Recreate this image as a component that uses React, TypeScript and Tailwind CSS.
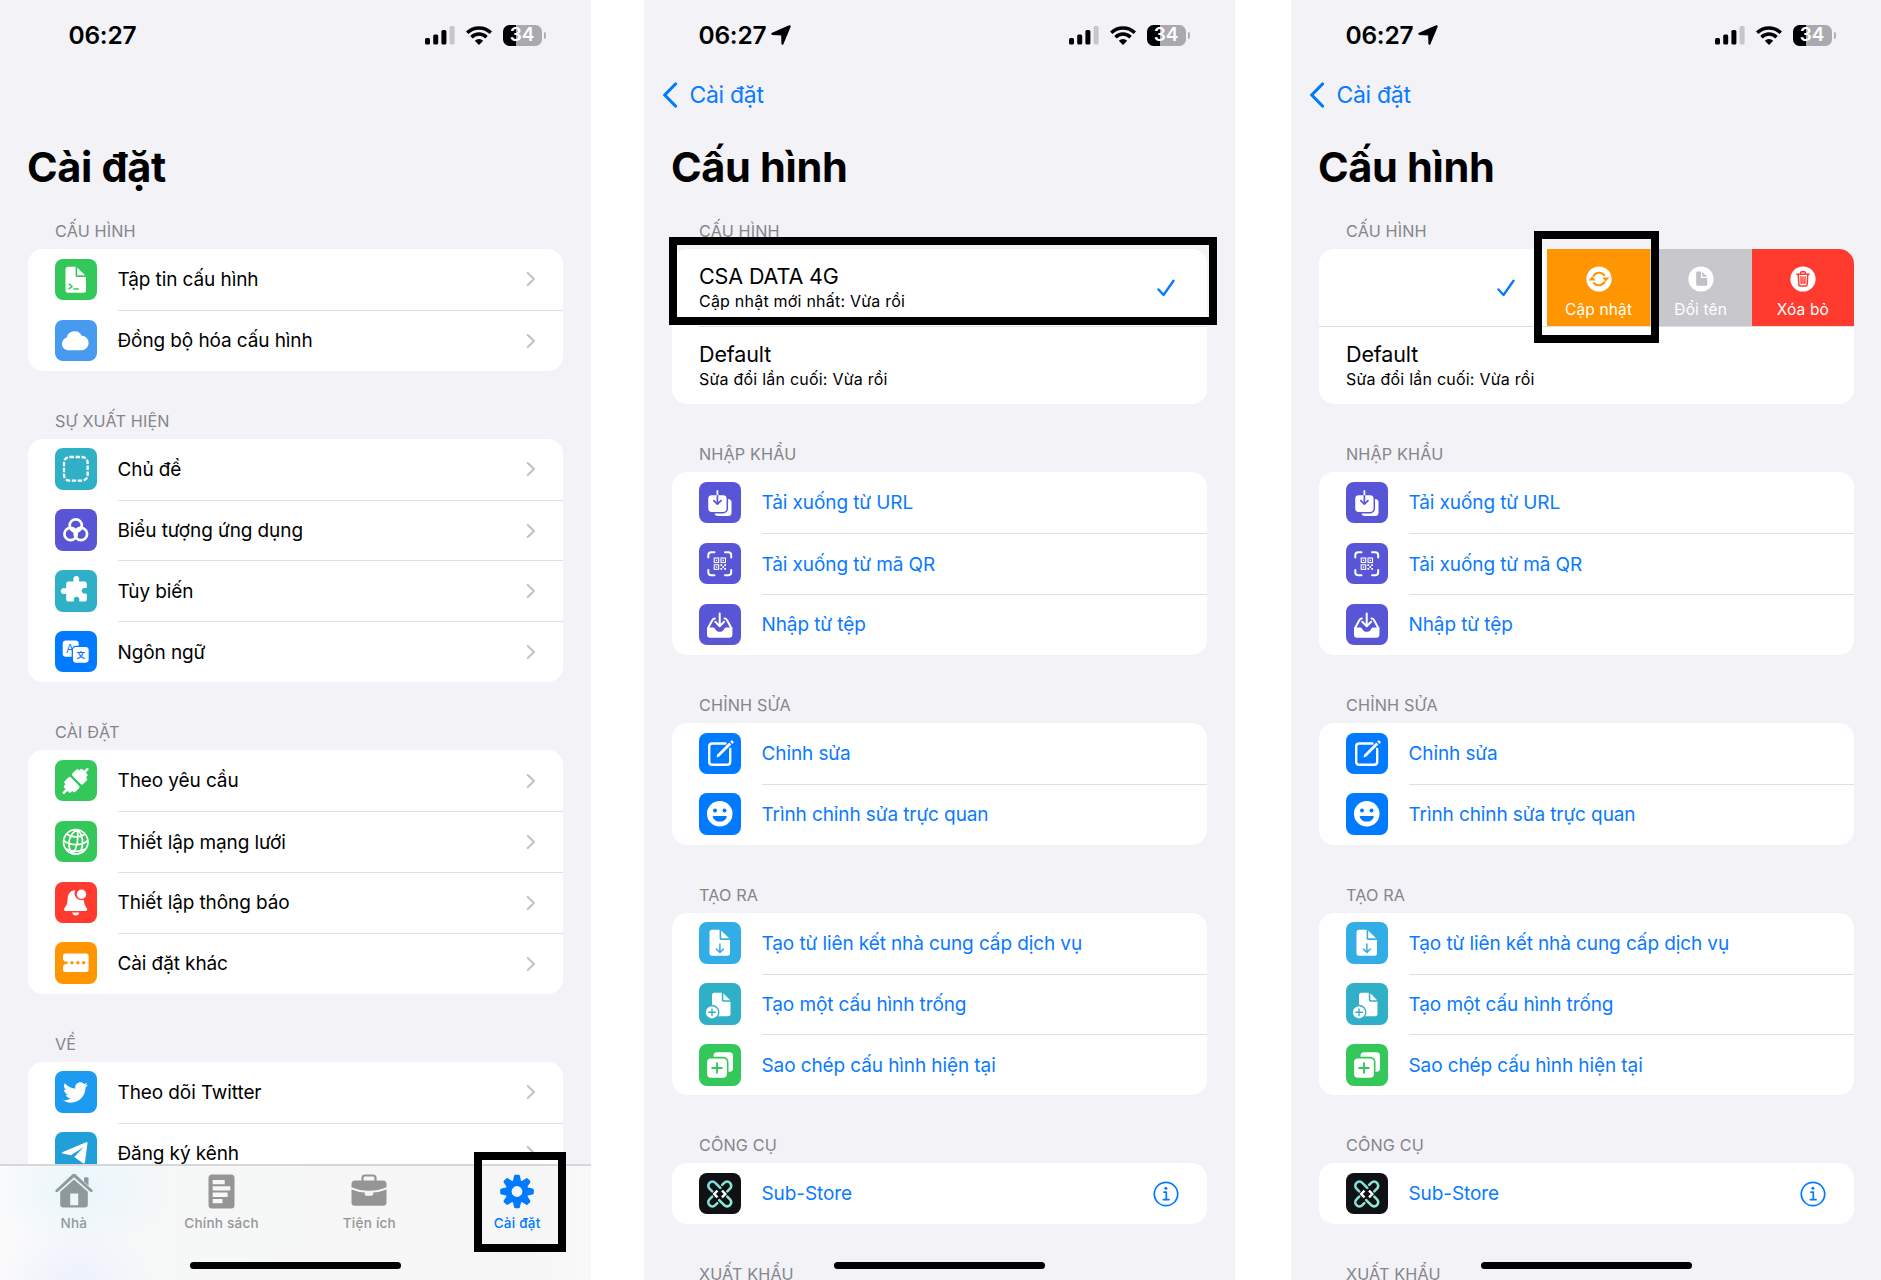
import type { ReactNode } from "react";
import { FaTwitter } from "react-icons/fa";

const Tile = ({ bg, children }: { bg: string; children: ReactNode }) => (
  <div className={`size-[41.5px] shrink-0 overflow-hidden rounded-[8px] ${bg}`}>
    <svg viewBox="0 0 41.5 41.5" className="block size-full" fill="none">
      {children}
    </svg>
  </div>
);

const GREEN = "bg-[#34c759]";
const TEAL = "bg-[#30b0c7]";
const INDIGO = "bg-[#5856d6]";
const BLUE = "bg-[#007aff]";

const Doc = ({ fold }: { fold: string }) => (
  <>
    <path fill="#fff" d="M13 7.8h7.6v8.6q0 1.6 1.6 1.6h8.8v13.2q0 2.5-2.5 2.5H13q-2.5 0-2.5-2.5V10.3q0-2.5 2.5-2.5z" />
    <path fill="#fff" stroke={fold} strokeWidth="0.4" d="M22 8.2v7.7q0 .7.7.7h7.9z" />
  </>
);

const icons: Record<string, ReactNode> = {
  file: (
    <Tile bg={GREEN}>
      <Doc fold="#34c759" />
      <path stroke="#34c759" strokeWidth="1.5" strokeLinecap="round" strokeLinejoin="round" d="M14.2 25.2l3 2.3-3 2.2M19 30h4.2" />
    </Tile>
  ),
  cloud: (
    <Tile bg="bg-[#469bf0]">
      <path fill="#fff" d="M13 30.2a6.4 6.4 0 0 1-1.3-12.6 8 8 0 0 1 15-1.9 7.3 7.3 0 0 1 .8 14.5z" />
    </Tile>
  ),
  theme: (
    <Tile bg={TEAL}>
      <rect x="9" y="9" width="23.6" height="23.6" rx="5.5" stroke="#fff" strokeWidth="2.3" strokeDasharray="4.4 1.6" />
    </Tile>
  ),
  rings: (
    <Tile bg={INDIGO}>
      <g stroke="#fff" strokeWidth="2.7">
        <circle cx="20.75" cy="16.4" r="6.1" />
        <circle cx="15.6" cy="25" r="6.2" />
        <circle cx="25.9" cy="25" r="6.2" />
      </g>
    </Tile>
  ),
  puzzle: (
    <Tile bg={TEAL}>
      <path
        fill="#fff"
        d="M13.4 11.5h4.4c.9 0 1-.7.7-1.400a3 3 0 1 1 5.6 0c-.3.7-.2 1.400.7 1.400h4.800q2.200 0 2.200 2.200v3.600c0 .8-.7.9-1.300.7a2.900 2.900 0 1 0 0 5.500c.6-.2 1.300-.1 1.300.7v5.200q0 2.200-2.200 2.200h-4.600c-.8 0-.9-.7-.7-1.300a2.800 2.800 0 1 0-5.400 0c.2.6.1 1.300-.7 1.300h-4.800q-2.200 0-2.200-2.200v-4.800c0-.9-.7-1-1.400-.7a3 3 0 1 1 0-5.600c.7.3 1.400.2 1.400-.7v-3.900q0-2.200 2.200-2.200z"
      />
    </Tile>
  ),
  language: (
    <Tile bg={BLUE}>
      <rect x="7.7" y="9.5" width="16" height="16.3" rx="3.2" fill="#fff" />
      <text x="15" y="22" fontSize="11.5" textAnchor="middle" fill="#007aff" fontFamily="Inter, sans-serif">A</text>
      <rect x="17.3" y="15.3" width="17" height="17" rx="3.8" fill="#fff" stroke="#007aff" strokeWidth="1.3" />
      <text x="25.8" y="27.3" fontSize="8.5" fontWeight="700" textAnchor="middle" fill="#007aff" fontFamily="'Noto Sans CJK SC', sans-serif">文</text>
    </Tile>
  ),
  plug: (
    <Tile bg={GREEN}>
      <g transform="rotate(45 20.75 20.75)" fill="#fff">
        <rect x="19.5" y="3" width="2.5" height="8" rx="1.2" />
        <rect x="16" y="7.8" width="9.5" height="6" rx="1.5" />
        <rect x="13.2" y="11" width="15.1" height="8.6" rx="1.8" />
        <rect x="13.2" y="21.9" width="15.1" height="8.6" rx="1.8" />
        <rect x="16" y="28.2" width="9.5" height="5.6" rx="1.5" />
        <rect x="19.5" y="31" width="2.5" height="8" rx="1.2" />
      </g>
    </Tile>
  ),
  globe: (
    <Tile bg={GREEN}>
      <g stroke="#fff" strokeWidth="1.7">
        <circle cx="20.75" cy="20.9" r="12.2" />
        <path d="M22.5 8.7c-9 4-11 16-5.5 23.7M22.5 8.7c1 8 0 17-4.5 24.2M22.5 8.7c5.5 5 7 15 2 23.7M11.7 12.8c5 4 13 4 18.5.5M8.6 19.5c7 5.5 18 5.5 24.3 0M10.8 27.800c6 3.300 14.500 3.300 20 0" />
      </g>
    </Tile>
  ),
  bell: (
    <Tile bg="bg-[#ff3b30]">
      <path fill="#fff" d="M19.2 8.2c-4.4.9-6.3 4-6.5 8.3-.2 5.300-1.500 7.300-3.200 9.500-1.100 1.500-.4 3 1.200 3h19.800c1.600 0 2.300-1.500 1.200-3-1.500-2-2.600-4-3-8.200a6.800 6.800 0 0 1-8.300-9.600zM17.300 30.500h6.900a3.500 3.500 0 0 1-6.900 0z" />
      <circle cx="26.5" cy="12.3" r="4.7" fill="#fff" />
    </Tile>
  ),
  more: (
    <Tile bg="bg-[#ff9500]">
      <path fill="#fff" d="M10.5 11.5h20.6q2.500 0 2.500 2.500v13.500q0 2.500-2.500 2.500H10.500q-2.500 0-2.500-2.500V24a3.400 3.400 0 0 0 0-6.300V14q0-2.500 2.500-2.500z" />
      <g fill="#ff9500">
        <circle cx="11.2" cy="20.8" r="1.5" />
        <circle cx="17" cy="20.8" r="1.7" />
        <circle cx="22.9" cy="20.8" r="1.7" />
        <circle cx="28.7" cy="20.8" r="1.7" />
      </g>
    </Tile>
  ),
  twitter: (
    <div className="flex size-[41.5px] shrink-0 items-center justify-center rounded-[8px] bg-[#1d9bf0]">
      <FaTwitter size={25} color="#fff" />
    </div>
  ),
  telegram: (
    <Tile bg="bg-[#229ed9]">
      <path fill="#fff" d="M7.3 20.3L31 10.2q1.700-.500 1.500 1.200l-2.600 19q-.400 1.800-2 .800l-8.600-6.300L28.600 15 16 23.300l-8.500-1.700q-1.300-.500-.2-1.300z" />
    </Tile>
  ),
  url: (
    <Tile bg={INDIGO}>
      <rect x="15.5" y="17" width="17" height="17" rx="3.5" fill="#fff" />
      <rect x="8.5" y="12.6" width="19.8" height="18.2" rx="4.2" fill="#fff" stroke="#5856d6" strokeWidth="1.5" />
      <path stroke="#fff" strokeWidth="1.8" strokeLinecap="round" d="M18.4 8.8v5" />
      <path stroke="#5856d6" strokeWidth="1.7" strokeLinecap="round" strokeLinejoin="round" d="M18.4 13.8v8.2M14.8 18.6l3.6 3.6 3.6-3.6" />
    </Tile>
  ),
  qr: (
    <Tile bg={INDIGO}>
      <path stroke="#fff" strokeWidth="2" strokeLinecap="round" d="M9.3 14.5v-2.2q0-3 3-3h3.200M26 9.300h3.200q3 0 3 3v2.200M32.200 27v2.200q0 3-3 3H26M15.500 32.200h-3.200q-3 0-3-3V27" />
      <g stroke="#fff" strokeWidth="1.1">
        <rect x="15.2" y="15" width="4.5" height="4.5" />
        <rect x="22" y="15" width="4.5" height="4.5" />
        <rect x="15.2" y="21.8" width="4.5" height="4.5" />
      </g>
      <g fill="#fff">
        <rect x="16.8" y="16.6" width="1.4" height="1.4" />
        <rect x="23.6" y="16.6" width="1.4" height="1.4" />
        <rect x="16.8" y="23.4" width="1.4" height="1.4" />
        <rect x="21.4" y="21.2" width="1.8" height="1.8" />
        <rect x="25.2" y="21.2" width="1.8" height="1.8" />
        <rect x="23.3" y="23.1" width="1.8" height="1.8" />
        <rect x="21.4" y="25" width="1.8" height="1.8" />
        <rect x="25.2" y="25" width="1.8" height="1.8" />
      </g>
    </Tile>
  ),
  tray: (
    <Tile bg={INDIGO}>
      <path fill="#fff" d="M8 23.4h6.300q1.400 0 1.800 1.300 1.200 3.100 4.600 3.100t4.600-3.100q.4-1.300 1.800-1.300h6.300v7.300q0 3-3 3H11q-3 0-3-3z" />
      <path stroke="#fff" strokeWidth="2" strokeLinecap="round" strokeLinejoin="round" d="M9 24.200l4.300-8q.9-1.600 2.600-1.600M32.400 24.200l-4.300-8q-.9-1.600-2.600-1.600M20.700 9.500v11.800M16.300 17.800l4.400 4.400 4.400-4.400" />
    </Tile>
  ),
  edit: (
    <Tile bg={BLUE}>
      <path stroke="#fff" strokeWidth="2.4" strokeLinecap="round" d="M26.500 10.500H13.200q-3 0-3 3v15.200q0 3 3 3h15q3 0 3-3V16" />
      <path stroke="#fff" strokeWidth="2.8" d="M19.600 22.200L31.300 10.500" />
      <path fill="#fff" d="M18.500 20.800l2.400 2.400-3.500 1.300zM31.200 8.600l1.300-1.100q.6-.4 1.200.2l.7.7q.6.6.1 1.300l-1 1.200z" />
    </Tile>
  ),
  smile: (
    <Tile bg={BLUE}>
      <circle cx="20.75" cy="20.75" r="12.8" fill="#fff" />
      <g fill="#007aff">
        <circle cx="16" cy="17.5" r="2" />
        <circle cx="25.5" cy="17.5" r="2" />
        <path d="M14.500 23h12.500q1 0 .8.900c-1 3-3.700 4.700-7 4.700s-6-1.700-7.100-4.700q-.2-.9.800-.9z" />
      </g>
    </Tile>
  ),
  docDown: (
    <Tile bg="bg-[#32ade6]">
      <Doc fold="#32ade6" />
      <path stroke="#32ade6" strokeWidth="1.5" strokeLinecap="round" strokeLinejoin="round" d="M20.900 22v8.200M17.400 27l3.500 3.500 3.500-3.500" />
    </Tile>
  ),
  docPlus: (
    <Tile bg={TEAL}>
      <path fill="#fff" d="M15.500 9.800h7.300v7.300q0 1.700 1.700 1.700h7v12q0 2.500-2.500 2.500H13V12.300q0-2.500 2.500-2.500z" />
      <path fill="#fff" d="M24.300 10.200v6.300q0 .8.800.8h6.100z" />
      <circle cx="13" cy="29.3" r="6.8" fill="#fff" stroke="#30b0c7" strokeWidth="1.4" />
      <path stroke="#30b0c7" strokeWidth="1.4" strokeLinecap="round" d="M13 26v6.600M9.700 29.300h6.600" />
    </Tile>
  ),
  copy: (
    <Tile bg={GREEN}>
      <rect x="14.5" y="8.2" width="19.5" height="19.5" rx="3.5" fill="#fff" />
      <rect x="7.3" y="13.6" width="21.4" height="21" rx="4.5" fill="#fff" stroke="#34c759" strokeWidth="1.6" />
      <path stroke="#34c759" strokeWidth="1.9" strokeLinecap="round" d="M18 19.200v9.600M13.200 24h9.600" />
    </Tile>
  ),
  substore: (
    <Tile bg="bg-[#101114]">
      <defs>
        <linearGradient id="mint" gradientUnits="userSpaceOnUse" x1="8" y1="8" x2="33" y2="33">
          <stop offset="0" stopColor="#7fd6e0" />
          <stop offset="1" stopColor="#8ff0c4" />
        </linearGradient>
      </defs>
      <g stroke="url(#mint)" strokeWidth="2.6" strokeLinecap="round">
        <path d="M13.200 18.300l-2.700-2.700a4.100 4.100 0 0 1 5.800-5.800l5 5" />
        <path d="M28.300 18.300l2.700-2.700a4.100 4.100 0 0 0-5.800-5.800l-2 2" />
        <path d="M13.200 23.700l-2.700 2.700a4.100 4.100 0 0 0 5.800 5.800l2-2" />
        <path d="M28.300 23.700l2.700 2.700a4.100 4.100 0 0 1-5.800 5.800l-5-5" />
      </g>
      <path stroke="#fff" strokeWidth="2.4" d="M18.500 17.600L15.200 21l3.300 3.400M23 17.600l3.300 3.400-3.300 3.400" />
    </Tile>
  ),
};

const Chevron = () => (
  <svg viewBox="0 0 10 16" className="mr-[27.5px] h-[16px] w-[10px]" fill="none" stroke="#c4c4c7" strokeWidth="2.2" strokeLinecap="round" strokeLinejoin="round">
    <path d="M1.800 2l6.200 6-6.200 6" />
  </svg>
);

const Info = () => (
  <svg viewBox="0 0 26 26" className="mr-[28.5px] size-[26px]" fill="none" stroke="#007aff" strokeWidth="1.7">
    <circle cx="13" cy="13" r="11.7" />
    <path strokeLinecap="round" strokeLinejoin="round" d="M11 11.200h2.300v7.200M10.400 18.600h5.600" />
    <circle cx="12.9" cy="7.3" r="1.5" fill="#007aff" stroke="none" />
  </svg>
);

type Row = { icon: string; label: string; info?: boolean };

const Header = ({ children, first }: { children: string; first?: boolean }) => (
  <div className={`flex items-end pb-[8px] pl-[27px] ${first ? "h-[40px]" : "h-[68.1px]"}`}>
    <span className="text-[16.2px] leading-[20px] tracking-[0.15px] whitespace-nowrap text-[#85858b]">{children}</span>
  </div>
);

const Group = ({ title, rows, link, first }: { title: string; rows: Row[]; link?: boolean; first?: boolean }) => (
  <section>
    <Header first={first}>{title}</Header>
    <div className="rounded-[15px] bg-white">
      {rows.map((r, i) => (
        <div key={r.label} className="flex h-[60.85px] items-center pl-[27px]">
          {icons[r.icon]}
          <div className={`ml-[21px] flex h-full flex-1 items-center justify-between ${i ? "border-t border-[#dfdfe2]" : ""}`}>
            <span className={`pt-[1.5px] text-[19px] tracking-[-0.1px] whitespace-nowrap ${link ? "text-[#0a7aff]" : "text-black"}`}>{r.label}</span>
            {!link && <Chevron />}
            {r.info && <Info />}
          </div>
        </div>
      ))}
    </div>
  </section>
);

const StatusBar = ({ arrow }: { arrow?: boolean }) => (
  <div className={`flex h-[70px] items-center ${arrow ? "pl-[54.5px]" : "pl-[68.5px]"} pr-[45px]`}>
    <span className="text-[24.5px] font-semibold tracking-[-0.25px]">06:27</span>
    {arrow && (
      <svg viewBox="0 0 20 20" className="ml-[5px] size-[20px]">
        <path stroke="#000" strokeWidth="1.2" strokeLinejoin="round" d="M18.700.900q.6.200.3.900L12 18.600q-.7 1.300-1 0L10.800 9.800 1.600 9.300Q.200 8.900 1.400 8.300L17.800 1q.500-.300.900-.100z" />
      </svg>
    )}
    <div className="ml-auto flex items-center">
      <svg viewBox="0 0 30 19" className="mr-[11px] h-[19px] w-[30px]">
        <rect x="0" y="12" width="5" height="6.5" rx="1.5" />
        <rect x="8.2" y="8.5" width="5" height="10" rx="1.5" />
        <rect x="16.4" y="4" width="5" height="14.5" rx="1.5" />
        <rect x="24.6" y="0" width="5" height="18.5" rx="1.5" fill="#c6c6ca" />
      </svg>
      <svg viewBox="0 0 26 19" className="mr-[11px] h-[19px] w-[26px]" fill="none" stroke="#000" strokeWidth="3.5">
        <path d="M1.200 6.800a16.700 16.700 0 0 1 23.600 0" />
        <path d="M5.500 11.200a10.600 10.600 0 0 1 15 0" />
        <path d="M13 19l-4.200-4.300a6 6 0 0 1 8.400 0z" fill="#000" stroke="none" />
      </svg>
      <div className="flex h-[21px] w-[39px] items-center justify-center rounded-[6.5px] bg-[linear-gradient(90deg,#000_34%,#aaaaae_34%)] text-[19px] font-semibold text-white">34</div>
      <div className="ml-[2px] h-[7px] w-[2.5px] rounded-r-full bg-[#b0b0b4]" />
    </div>
  </div>
);

const Back = () => (
  <div className="flex h-[50px] items-center pl-[17.5px]">
    <svg viewBox="0 0 16 26" className="h-[26px] w-[16px]" fill="none" stroke="#007aff" strokeWidth="3.2" strokeLinecap="round" strokeLinejoin="round">
      <path d="M13.500 2L2.700 13l10.800 11" />
    </svg>
    <span className="ml-[12px] pt-px text-[23px] tracking-[-0.3px] text-[#0a7aff]">Cài đặt</span>
  </div>
);

const Title = ({ children }: { children: string }) => (
  <h1 className="flex h-[89px] items-center pt-[7px] pl-[27px] text-[41.5px] leading-none font-bold tracking-[-0.35px]">{children}</h1>
);

const HomeIndicator = () => <div className="absolute bottom-[11px] left-[190px] h-[7px] w-[211px] rounded-full bg-black" />;

const Check = ({ className }: { className: string }) => (
  <svg viewBox="0 0 18 18" className={`h-[18px] w-[18px] ${className}`} fill="none" stroke="#0a7aff" strokeWidth="2.4" strokeLinecap="round" strokeLinejoin="round">
    <path d="M1.500 10.500l5 5.500L16.500 1.800" />
  </svg>
);

const Profile = ({ name, note }: { name: string; note: string }) => (
  <div className="flex flex-col justify-center pt-[3px] pl-[27px]">
    <span className="text-[21.5px] leading-[25px] tracking-[-0.12px] whitespace-nowrap">{name}</span>
    <span className="text-[16px] leading-[25px] tracking-[0.22px] whitespace-nowrap">{note}</span>
  </div>
);

const Action = ({ bg, label, children }: { bg: string; label: string; children: ReactNode }) => (
  <div className={`flex w-[102.2px] flex-col items-center pt-[16.5px] ${bg}`}>
    <svg viewBox="0 0 26 26" className="size-[26px]" fill="none">
      <circle cx="13" cy="13" r="12.6" fill="#fff" />
      {children}
    </svg>
    <span className="mt-[8px] text-[15.5px] leading-[20px] tracking-[0.15px] whitespace-nowrap text-white">{label}</span>
  </div>
);

const ConfigScreen = ({ swiped }: { swiped?: boolean }) => (
  <div className={`relative h-[1280px] shrink-0 overflow-hidden bg-[#f2f2f7] ${swiped ? "w-[590px]" : "w-[591px]"}`}>
    <StatusBar arrow />
    <Back />
    <Title>Cấu hình</Title>
    <div className="mx-[28px] w-[535px]">
      <Header first>CẤU HÌNH</Header>
      <div className="overflow-hidden rounded-[15px] bg-white">
        {swiped ? (
          <div className="flex h-[77.3px] justify-end">
            <Check className="mt-[30px] mr-[32.5px]" />
            <Action bg="bg-[#ff9500]" label="Cập nhật">
              <path stroke="#ff9500" strokeWidth="2" d="M7.200 10.500a6.600 6.600 0 0 1 11.500-.700M18.800 15.500a6.600 6.600 0 0 1-11.500.700" />
              <path fill="#ff9500" d="M16.300 11.500h7l-3.500 4.300zM9.700 14.500h-7l3.500-4.300z" />
            </Action>
            <Action bg="bg-[#c7c7cc]" label="Đổi tên">
              <path fill="#c0c0c5" d="M9.500 5.500h3.500v6.500h6.200v6.500q0 1.300-1.300 1.300H9.500q-1.300 0-1.300-1.300V6.800q0-1.300 1.300-1.300zM14.300 5.700v5h4.900z" />
            </Action>
            <Action bg="bg-[#ff3b30]" label="Xóa bỏ">
              <g stroke="#ff3b30" strokeWidth="1.5" strokeLinecap="round" strokeLinejoin="round">
                <path d="M6.800 8.300h12.400M10.700 8V6.500q0-.8.800-.8h3q.8 0 .8.800V8" />
                <path d="M8.200 8.600l.7 10.300q0 1 1 1h6.200q1 0 1-1l.7-10.300" />
                <path strokeWidth="1.4" d="M10.900 10.800l.3 6.800M13 10.800v6.800M15.100 10.800l-.3 6.800" />
              </g>
            </Action>
          </div>
        ) : (
          <div className="flex h-[77.3px] items-center justify-between">
            <Profile name="CSA DATA 4G" note="Cập nhật mới nhất: Vừa rồi" />
            <Check className="mr-[32px]" />
          </div>
        )}
        <div className={`h-px bg-[#dfdfe2] ${swiped ? "" : "ml-[27px]"}`} />
        <div className="flex h-[76.9px] items-center">
          <Profile name="Default" note="Sửa đổi lần cuối: Vừa rồi" />
        </div>
      </div>
      <Group
        link
        title="NHẬP KHẨU"
        rows={[
          { icon: "url", label: "Tải xuống từ URL" },
          { icon: "qr", label: "Tải xuống từ mã QR" },
          { icon: "tray", label: "Nhập từ tệp" },
        ]}
      />
      <Group
        link
        title="CHỈNH SỬA"
        rows={[
          { icon: "edit", label: "Chỉnh sửa" },
          { icon: "smile", label: "Trình chỉnh sửa trực quan" },
        ]}
      />
      <Group
        link
        title="TẠO RA"
        rows={[
          { icon: "docDown", label: "Tạo từ liên kết nhà cung cấp dịch vụ" },
          { icon: "docPlus", label: "Tạo một cấu hình trống" },
          { icon: "copy", label: "Sao chép cấu hình hiện tại" },
        ]}
      />
      <Group link title="CÔNG CỤ" rows={[{ icon: "substore", label: "Sub-Store", info: true }]} />
      <Header>XUẤT KHẨU</Header>
    </div>
    <HomeIndicator />
  </div>
);

const Tab = ({ label, color, children }: { label: string; color: string; children: ReactNode }) => (
  <div className={`flex flex-1 flex-col items-center pt-[6.5px] ${color}`}>
    <svg viewBox="0 0 38 36" className="h-[36px] w-[38px]" fill="currentColor">
      {children}
    </svg>
    <span className="mt-[4px] text-[13.5px] leading-[20px] font-medium tracking-[0.25px] whitespace-nowrap">{label}</span>
  </div>
);

const TabBar = () => (
  <div className="absolute inset-x-0 bottom-0 flex h-[116px] items-start border-t-2 border-[#d6d7d9] bg-[radial-gradient(ellipse_80px_60px_at_76px_100%,#edf1fd,transparent),radial-gradient(ellipse_90px_70px_at_80px_20%,#e9f6fb,transparent),linear-gradient(90deg,#fbfbfc,#f6f7f7_30%,#f6f6f6_90%,#f9f9fa)]">
    <Tab label="Nhà" color="text-[#8e999c]">
      <path d="M19 .800q1 0 1.800.800L37.300 17q.900 1-.1 1.800-.9.800-1.900-.1L19 4.300 2.700 18.700q-1 .9-1.900.1-1-.8-.1-1.800L17.200 1.600Q18 .800 19 .800zM30 4.300h2.500q1 0 1 1v7.400L29 8.500V5.300q0-1 1-1z" />
      <path fillRule="evenodd" d="M19 6.500l13.800 12.300v12.700q0 3-3 3H8.200q-3 0-3-3V18.800zM15.200 20.500v11.700h8V20.500z" />
    </Tab>
    <Tab label="Chính sách" color="text-[#959595]">
      <path fillRule="evenodd" d="M9 1.500h19q3.500 0 3.500 3.500v27q0 3.500-3.500 3.500H9Q5.500 35.500 5.500 32V5q0-3.500 3.500-3.500zM9.700 7v4.300h12V7zM9.700 13.300v4.300h17.600v-4.300zM9.700 19.600v4.300h14.900v-4.300zM9.700 25.900v4.300h9.800v-4.300z" />
    </Tab>
    <Tab label="Tiện ích" color="text-[#959595]">
      <path fill="none" stroke="currentColor" strokeWidth="2.2" d="M12.500 8V5q0-2.500 2.500-2.500h8q2.500 0 2.500 2.500v3" />
      <path d="M5 7.500h28q3.500 0 3.500 3.500v3.200Q28 17.800 19 17.800T1.500 14.200V11Q1.500 7.500 5 7.500zM1.500 16.500q6 2.500 13.300 3v1.800q0 1.400 1.400 1.400h5.600q1.400 0 1.400-1.400v-1.800q7.300-.500 13.300-3V29.300q0 3.500-3.500 3.500H5q-3.500 0-3.500-3.500z" />
    </Tab>
    <Tab label="Cài đặt" color="text-[#007aff]">
      <path fillRule="evenodd" d="M19 7a11.500 11.500 0 1 0 0 23 11.500 11.500 0 0 0 0-23zm0 6.100a5.400 5.400 0 1 1 0 10.800 5.400 5.400 0 0 1 0-10.800z" />
      {[0, 45, 90, 135, 180, 225, 270, 315].map((a) => (
        <path key={a} transform={`rotate(${a} 19 18.5)`} d="M14.800 9l1.200-6q.3-1.300 1.600-1.300h2.800q1.300 0 1.600 1.300l1.200 6z" />
      ))}
    </Tab>
  </div>
);

const SettingsScreen = () => (
  <div className="relative h-[1280px] w-[591px] shrink-0 overflow-hidden bg-[#f2f2f7]">
    <StatusBar />
    <div className="h-[50px]" />
    <Title>Cài đặt</Title>
    <div className="mx-[28px] w-[535px]">
      <Group
        first
        title="CẤU HÌNH"
        rows={[
          { icon: "file", label: "Tập tin cấu hình" },
          { icon: "cloud", label: "Đồng bộ hóa cấu hình" },
        ]}
      />
      <Group
        title="SỰ XUẤT HIỆN"
        rows={[
          { icon: "theme", label: "Chủ đề" },
          { icon: "rings", label: "Biểu tượng ứng dụng" },
          { icon: "puzzle", label: "Tùy biến" },
          { icon: "language", label: "Ngôn ngữ" },
        ]}
      />
      <Group
        title="CÀI ĐẶT"
        rows={[
          { icon: "plug", label: "Theo yêu cầu" },
          { icon: "globe", label: "Thiết lập mạng lưới" },
          { icon: "bell", label: "Thiết lập thông báo" },
          { icon: "more", label: "Cài đặt khác" },
        ]}
      />
      <Group
        title="VỀ"
        rows={[
          { icon: "twitter", label: "Theo dõi Twitter" },
          { icon: "telegram", label: "Đăng ký kênh" },
        ]}
      />
    </div>
    <TabBar />
    <HomeIndicator />
  </div>
);

export default function App() {
  return (
    <main className="relative flex h-[1280px] w-[1881px] overflow-hidden bg-white font-['Inter','Liberation_Sans',sans-serif] text-black">
      <SettingsScreen />
      <div className="w-[53px] shrink-0" />
      <ConfigScreen />
      <div className="w-[56px] shrink-0" />
      <ConfigScreen swiped />
      {/* Step highlights drawn over the screens */}
      <div className="absolute top-[1152px] left-[474px] h-[100px] w-[92px] border-8 border-black" />
      <div className="absolute top-[237px] left-[669px] h-[88px] w-[548px] border-8 border-black" />
      <div className="absolute top-[231px] left-[1534px] h-[112px] w-[125px] border-8 border-black" />
    </main>
  );
}
